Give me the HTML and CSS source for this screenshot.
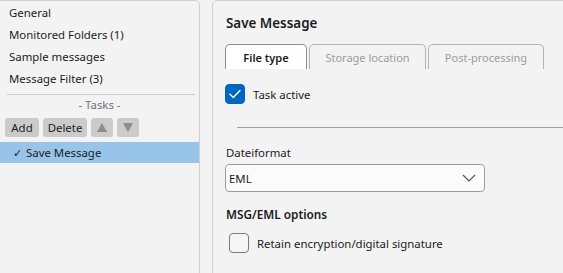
FILE: index.html
```html
<!DOCTYPE html>
<html>
<head>
<meta charset="utf-8">
<link rel="stylesheet" href="styles.css">
</head>
<body>
<div class="app">
  <aside class="side">
    <div class="nav-item">General</div>
    <div class="nav-item">Monitored Folders (1)</div>
    <div class="nav-item">Sample messages</div>
    <div class="nav-item">Message Filter (3)</div>
    <div class="sep"></div>
    <div class="tasks-label">- Tasks -</div>
    <div class="btn-row">
      <button class="btn btn-add">Add</button>
      <button class="btn btn-del">Delete</button>
      <button class="btn btn-arrow"><svg width="10" height="9" viewBox="0 0 10 9"><path d="M5 0 L10 9 L0 9 Z" fill="#8c8c8c"/></svg></button>
      <button class="btn btn-arrow"><svg width="10" height="9" viewBox="0 0 10 9"><path d="M0 0 L10 0 L5 9 Z" fill="#8c8c8c"/></svg></button>
    </div>
    <div class="task selected"><span class="tick">✓</span>Save Message</div>
  </aside>
  <main class="content">
    <h1 class="title">Save Message</h1>
    <div class="tabs">
      <div class="tab active tab-1">File type</div>
      <div class="tab tab-2">Storage location</div>
      <div class="tab tab-3">Post-processing</div>
    </div>
    <label class="check-row">
      <span class="box checked"><svg width="12" height="10" viewBox="0 0 12 10"><path d="M1 5.2 L4.3 8.4 L11 1.6" fill="none" stroke="#fff" stroke-width="1.4" stroke-linecap="round" stroke-linejoin="round"/></svg></span>
      <span class="check-text">Task active</span>
    </label>
    <div class="hr"></div>
    <div class="field-label">Dateiformat</div>
    <div class="select">
      <span>EML</span>
      <svg width="14" height="8" viewBox="0 0 14 8"><path d="M1 1 L7 7 L13 1" fill="none" stroke="#555" stroke-width="1.1"/></svg>
    </div>
    <div class="section">MSG/EML options</div>
    <label class="check-row indent">
      <span class="box"></span>
      <span class="check-text">Retain encryption/digital signature</span>
    </label>
  </main>
</div>
</body>
</html>
```

FILE: styles.css
```css
html, body {
  margin: 0;
  padding: 0;
  background: #f3f3f3;
  overflow: hidden;
}
body {
  font-family: "Segoe UI", "Noto Sans", sans-serif;
  font-size: 11.4px;
  color: #1b1b1b;
}
.app {
  display: flex;
  gap: 12px;
  width: 563px;
  height: 273px;
  overflow: hidden;
}
.side {
  flex: none;
  width: 201px;
  height: 300px;
  margin-left: -1px;
  border: 1px solid #cfcfcf;
  border-radius: 0 5px 0 0;
  background: #f3f3f3;
  padding-top: 1px;
  box-sizing: border-box;
}
.nav-item {
  height: 22px;
  line-height: 22px;
  padding-left: 9px;
}
.sep {
  height: 1px;
  background: #c9c9c9;
  margin: 4px 4px 0 7px;
}
.tasks-label {
  margin-top: 2px;
  height: 16px;
  line-height: 16px;
  text-align: center;
  color: #6f6f7f;
}
.btn-row {
  display: flex;
  gap: 4px;
  margin-top: 5px;
  padding-left: 5px;
}
.btn {
  height: 19px;
  border: none;
  border-radius: 3px;
  background: #cbcbcb;
  font-family: inherit;
  font-size: 11.4px;
  color: #1b1b1b;
  padding: 0;
  display: flex;
  align-items: center;
  justify-content: center;
}
.btn-add { width: 34px; }
.btn-del { width: 44px; }
.btn-arrow { width: 22px; }
.task {
  margin-top: 5px;
  height: 21px;
  line-height: 21px;
  padding-left: 13px;
}
.task.selected {
  background: #99c4ea;
}
.tick {
  margin-right: 4px;
}
.content {
  flex: none;
  width: 380px;
  height: 300px;
  border: 1px solid #cfcfcf;
  border-radius: 5px 0 0 0;
  padding: 12px 0 0 12px;
  box-sizing: border-box;
}
.title {
  margin: 0 0 0 1px;
  font-size: 13.4px;
  font-weight: 600;
  line-height: 20px;
  height: 20px;
}
.tabs {
  display: flex;
  gap: 2px;
  margin-top: 11px;
  height: 25px;
}
.tab {
  box-sizing: border-box;
  height: 25px;
  border: 1px solid #b4b4b4;
  border-bottom: none;
  border-radius: 5px 5px 0 0;
  text-align: center;
  line-height: 26px;
  color: #9c9c9c;
  font-size: 11px;
}
.tab.active {
  background: #fff;
  border-color: #8e8e8e;
  color: #1b1b1b;
  font-weight: 600;
}
.tab-1 { width: 82px; }
.tab-2 { width: 117px; }
.tab-3 { width: 116px; }
.check-row {
  display: flex;
  align-items: center;
  margin-top: 15px;
  height: 20px;
}
.check-row.indent {
  margin-left: 4px;
  margin-top: 10px;
}
.box {
  box-sizing: border-box;
  width: 20px;
  height: 20px;
  border-radius: 4px;
  border: 1px solid #7a7a7a;
  background: #f6f6f6;
  display: flex;
  align-items: center;
  justify-content: center;
  flex: none;
}
.box.checked {
  background: #0067c0;
  border-color: #0067c0;
}
.check-text {
  margin-left: 8px;
}
.hr {
  height: 1px;
  background: #a0a0a0;
  margin: 23px 0 0 12px;
}
.field-label {
  margin: 17px 0 0 1px;
  height: 16px;
  line-height: 16px;
}
.select {
  box-sizing: border-box;
  width: 260px;
  height: 28px;
  margin-top: 3px;
  border: 1px solid #9d9d9d;
  border-radius: 4px;
  background: #fbfbfb;
  display: flex;
  align-items: center;
  justify-content: space-between;
  padding: 0 8px 0 3px;
}
.section {
  margin: 13px 0 0 1px;
  font-size: 11.8px;
  font-weight: 600;
  height: 18px;
  line-height: 18px;
}
```
